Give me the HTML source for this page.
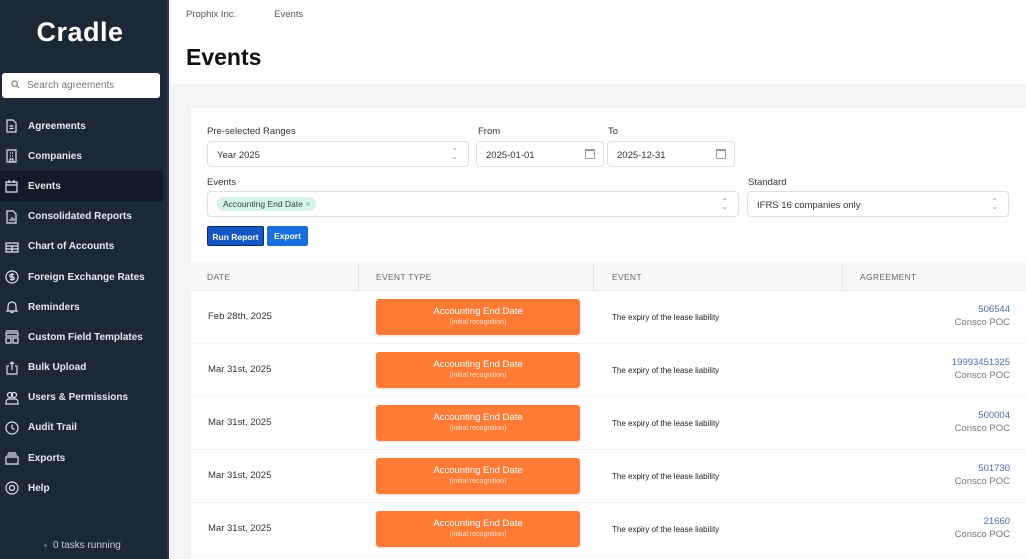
<!DOCTYPE html>
<html><head><meta charset="utf-8"><style>
*{box-sizing:border-box;margin:0;padding:0}
body{width:1026px;height:559px;overflow:hidden;font-family:"Liberation Sans",sans-serif;background:#f3f5f7;position:relative}
.sb{position:absolute;left:0;top:0;width:169px;height:559px;background:#1c2836;border-right:2px solid #2e3a48}
.logo{position:absolute;left:0;width:160px;top:17px;text-align:center;color:#fff;font-size:27px;font-weight:bold;letter-spacing:.5px}
.search{position:absolute;left:2px;top:73px;width:158px;height:25px;background:#fff;border-radius:3px;font-size:10px;color:#777;padding:7px 0 0 25px}
.search svg{position:absolute;left:9px;top:7px}
.nav{position:absolute;left:0;top:111px;width:163px}
.nav div{height:30.2px;display:flex;align-items:center;padding-left:28px;color:#e6e9ee;font-size:10px;font-weight:bold;position:relative}
.nav div.act{background:#111b27;border-radius:0 3px 3px 0}
.nav svg{position:absolute;left:5px;top:8px}
.tasks{position:absolute;left:53px;top:540px;color:#c9ced6;font-size:10px}
.tasks:before{content:"";position:absolute;left:-9px;top:4px;width:3px;height:3px;background:#667;border-radius:50%}
.top{position:absolute;left:171px;top:0;right:0;height:84px;background:#fff}
.bc{position:absolute;left:15px;top:9px;font-size:9.5px;color:#555}
.bc span{margin-left:38px}
h1{position:absolute;left:15px;top:44px;font-size:23px;font-weight:900;color:#111}
.card{position:absolute;left:191px;top:108px;right:0;bottom:0;background:#fff}
.lbl{position:absolute;font-size:9.5px;color:#333}
.inp{position:absolute;height:26px;border:1px solid #dde1e6;border-radius:4px;background:#fff;font-size:9.5px;color:#333;padding:8px 0 0 9px}
.chev{position:absolute;right:10px;top:7px;color:#999;font-size:8px;line-height:5px}
.cal{position:absolute;right:8px;top:7px;width:10px;height:10px;border:1px solid #999;border-radius:1px;border-top-width:2px}
.tag{display:inline-block;background:#d8f1ea;color:#1e4c3e;border-radius:8px;padding:2px 6px;font-size:8.5px;margin-top:-3px}
.btn{position:absolute;top:226px;height:20px;background:#1a6fe0;color:#fff;font-size:8.5px;font-weight:bold;border-radius:2px;text-align:center;line-height:20px}
.th{position:absolute;left:191px;right:0;top:262px;height:29px;background:#f8f9fb;border-bottom:1px solid #e8eaee;font-size:8.5px;color:#666;letter-spacing:.3px}
.th span{position:absolute;top:10px}
.th i{position:absolute;top:0;height:29px;border-left:1px solid #e4e6ea}
.row{position:absolute;left:191px;right:0;height:53px;border-bottom:1px solid #f3f4f6}
.row .d{position:absolute;left:17px;top:20px;font-size:9.5px;color:#333}
.row .b{position:absolute;left:185px;top:8px;width:204px;height:36px;background:#ff7a35;border-radius:3px;color:#fff;text-align:center;font-size:9.5px;padding-top:7px;box-shadow:0 1px 2px rgba(0,0,0,.15)}
.row .b small{display:block;font-size:7px;color:#ffe1cd;margin-top:2px}
.row .e{position:absolute;left:421px;top:22px;font-size:8px;color:#222}
.row .a{position:absolute;right:16px;top:12px;text-align:right;font-size:9.5px;color:#4a6fa8;line-height:13px}
.row .a em{font-style:normal;color:#777;display:block}
</style></head><body>
<div class="sb">
<div class="logo">Cradle</div>
<div class="search"><svg width="9" height="9" viewBox="0 0 10 10"><circle cx="4" cy="4" r="3" fill="none" stroke="#777" stroke-width="1.2"/><path d="M6.3 6.3L9 9" stroke="#777" stroke-width="1.2"/></svg>Search agreements</div>
<div class="nav">
<div><svg width="13" height="14" viewBox="0 0 13 14" fill="none" stroke="#dfe3e8" stroke-width="1.2"><path d="M2 1h6l3 3v9H2z M4.5 7h4M4.5 9.5h4"/></svg>Agreements</div>
<div><svg width="13" height="14" viewBox="0 0 13 14" fill="none" stroke="#dfe3e8" stroke-width="1.2"><path d="M2 1h9v12H2z M5 4h1M7 4h1M5 7h1M7 7h1M5 13v-3h3v3"/></svg>Companies</div>
<div class="act"><svg width="13" height="14" viewBox="0 0 13 14" fill="none" stroke="#dfe3e8" stroke-width="1.2"><path d="M1 3h11v10H1z M1 6h11M4 1v3M9 1v3"/></svg>Events</div>
<div><svg width="13" height="14" viewBox="0 0 13 14" fill="none" stroke="#dfe3e8" stroke-width="1.2"><path d="M2 1h6l3 3v9H2z M5 11V9M7 11V7M9 11V8"/></svg>Consolidated Reports</div>
<div><svg width="14" height="14" viewBox="0 0 14 14" fill="none" stroke="#dfe3e8" stroke-width="1.2"><path d="M1 3h12v9H1z M1 6h12M1 9h12M7 6v6"/></svg>Chart of Accounts</div>
<div><svg width="14" height="14" viewBox="0 0 14 14" fill="none" stroke="#dfe3e8" stroke-width="1.2"><circle cx="7" cy="7" r="6"/><path d="M9 4.5H6a1.2 1.2 0 000 2.5h2a1.2 1.2 0 010 2.5H5M7 3v8"/></svg>Foreign Exchange Rates</div>
<div><svg width="14" height="14" viewBox="0 0 14 14" fill="none" stroke="#dfe3e8" stroke-width="1.2"><path d="M3 10V6a4 4 0 018 0v4l1 1H2z M5.5 12.5h3"/></svg>Reminders</div>
<div><svg width="14" height="14" viewBox="0 0 14 14" fill="none" stroke="#dfe3e8" stroke-width="1.2"><path d="M1 1h12M1 3h12v3H1z M1 8h5v5H1z M8 8h5v5H8z"/></svg>Custom Field Templates</div>
<div><svg width="14" height="14" viewBox="0 0 14 14" fill="none" stroke="#dfe3e8" stroke-width="1.2"><path d="M4 5H2v8h10V5h-2M7 9V1M5 3l2-2 2 2"/></svg>Bulk Upload</div>
<div><svg width="14" height="14" viewBox="0 0 14 14" fill="none" stroke="#dfe3e8" stroke-width="1.2"><circle cx="5" cy="4" r="2.5"/><circle cx="9" cy="4" r="2.5"/><path d="M1 13v-2a3 3 0 013-3h6a3 3 0 013 3v2z"/></svg>Users &amp; Permissions</div>
<div><svg width="14" height="14" viewBox="0 0 14 14" fill="none" stroke="#dfe3e8" stroke-width="1.2"><circle cx="7" cy="7" r="6"/><path d="M7 3.5V7l2.5 1.5"/></svg>Audit Trail</div>
<div><svg width="14" height="14" viewBox="0 0 14 14" fill="none" stroke="#dfe3e8" stroke-width="1.2"><path d="M3 2h8M2 4h10M1 6h12v7H1z"/></svg>Exports</div>
<div><svg width="14" height="14" viewBox="0 0 14 14" fill="none" stroke="#dfe3e8" stroke-width="1.2"><circle cx="7" cy="7" r="6"/><circle cx="7" cy="7" r="2.5"/></svg>Help</div>
</div>
<div class="tasks">0 tasks running</div>
</div>
<div class="top"><div class="bc">Prophix Inc.<span>Events</span></div><h1>Events</h1></div>
<div class="card"></div>
<div class="lbl" style="left:207px;top:126px">Pre-selected Ranges</div>
<div class="lbl" style="left:478px;top:126px">From</div>
<div class="lbl" style="left:608px;top:126px">To</div>
<div class="inp" style="left:207px;top:141px;width:262px">Year 2025<div class="chev">⌃<br>⌄</div></div>
<div class="inp" style="left:476px;top:141px;width:128px">2025-01-01<div class="cal"></div></div>
<div class="inp" style="left:607px;top:141px;width:128px">2025-12-31<div class="cal"></div></div>
<div class="lbl" style="left:207px;top:177px">Events</div>
<div class="lbl" style="left:748px;top:177px">Standard</div>
<div class="inp" style="left:207px;top:191px;width:532px;padding-top:7px"><span class="tag">Accounting End Date <span style="color:#6bb">×</span></span><div class="chev">⌃<br>⌄</div></div>
<div class="inp" style="left:747px;top:191px;width:262px">IFRS 16 companies only<div class="chev">⌃<br>⌄</div></div>
<div class="btn" style="left:207px;width:57px;background:#1456c4;border:1px solid #0c2c66">Run Report</div>
<div class="btn" style="left:267px;width:41px">Export</div>
<div class="th"><span style="left:16px">DATE</span><i style="left:167px"></i><span style="left:185px">EVENT TYPE</span><i style="left:402px"></i><span style="left:421px">EVENT</span><i style="left:651px"></i><span style="left:669px">AGREEMENT</span></div>
<div class="row" style="top:291px"><div class="d">Feb 28th, 2025</div><div class="b">Accounting End Date<small>(initial recognition)</small></div><div class="e">The expiry of the lease liability</div><div class="a">506544<em>Consco POC</em></div></div>
<div class="row" style="top:344px"><div class="d">Mar 31st, 2025</div><div class="b">Accounting End Date<small>(initial recognition)</small></div><div class="e">The expiry of the lease liability</div><div class="a">19993451325<em>Consco POC</em></div></div>
<div class="row" style="top:397px"><div class="d">Mar 31st, 2025</div><div class="b">Accounting End Date<small>(initial recognition)</small></div><div class="e">The expiry of the lease liability</div><div class="a">500004<em>Consco POC</em></div></div>
<div class="row" style="top:450px"><div class="d">Mar 31st, 2025</div><div class="b">Accounting End Date<small>(initial recognition)</small></div><div class="e">The expiry of the lease liability</div><div class="a">501730<em>Consco POC</em></div></div>
<div class="row" style="top:503px"><div class="d">Mar 31st, 2025</div><div class="b">Accounting End Date<small>(initial recognition)</small></div><div class="e">The expiry of the lease liability</div><div class="a">21660<em>Consco POC</em></div></div>
</body></html>
